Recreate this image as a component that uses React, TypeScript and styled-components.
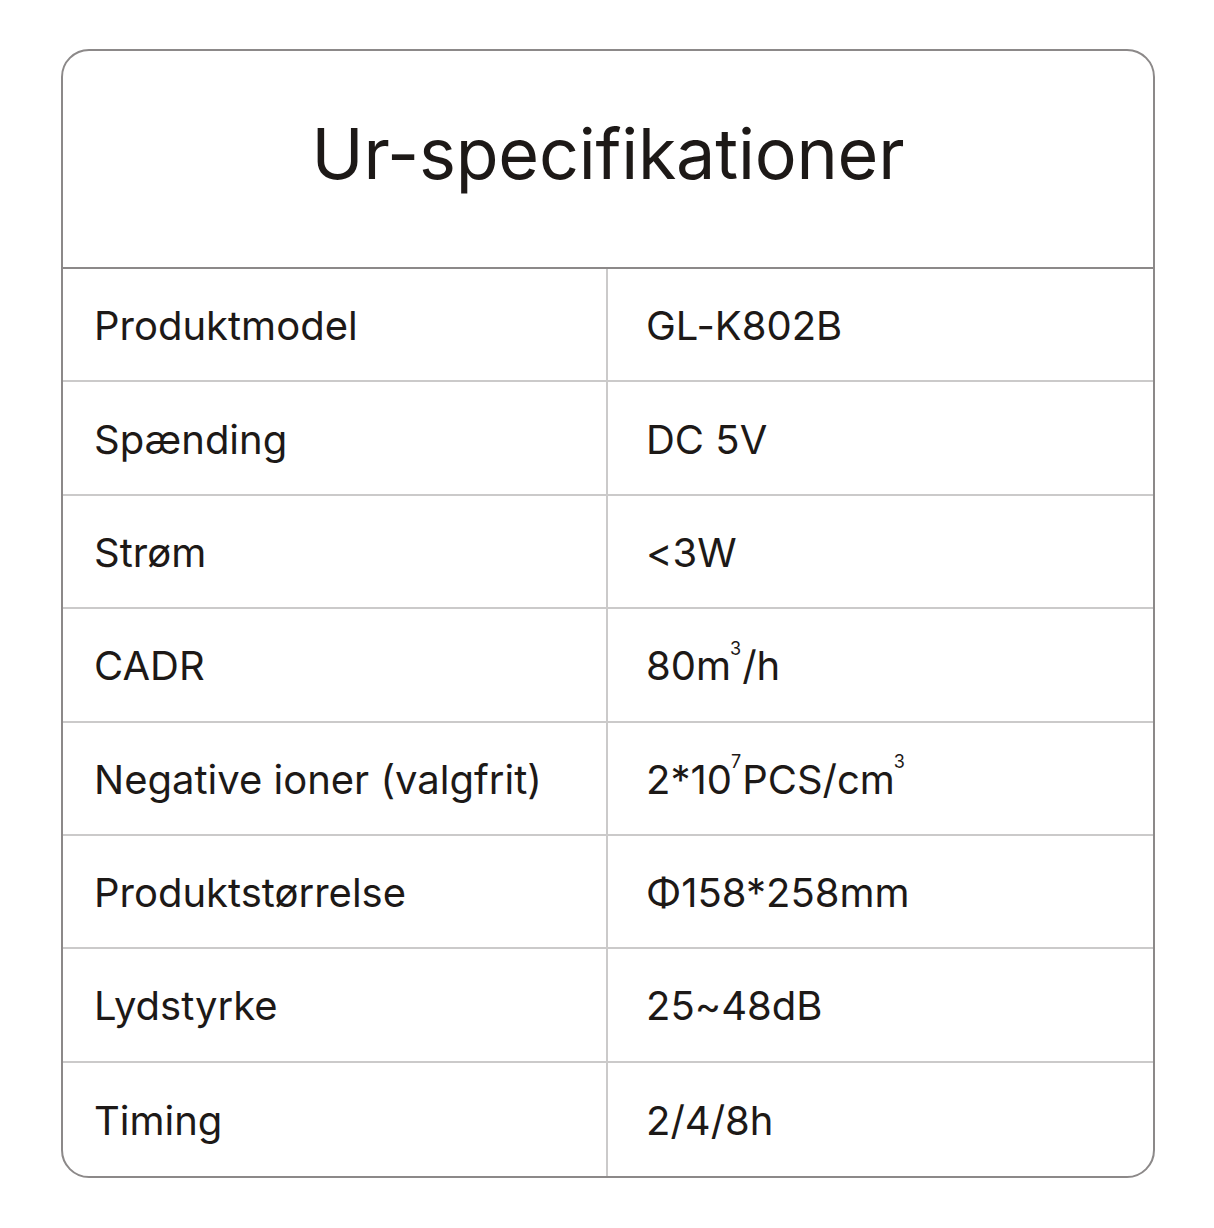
import React from "react";
import styled, { createGlobalStyle } from "styled-components";

const GlobalStyle = createGlobalStyle`
  html, body {
    margin: 0;
    padding: 0;
    background: #ffffff;
  }
  body {
    font-family: "Inter", "Noto Sans", "Liberation Sans", sans-serif;
    font-feature-settings: "liga" 0, "calt" 0;
    color: #1d1917;
  }
`;

const Page = styled.div`
  width: 1214px;
  height: 1228px;
  padding: 49px 59px 0 61px;
  box-sizing: border-box;
`;

const Card = styled.div`
  height: 1129px;
  box-sizing: border-box;
  display: flex;
  flex-direction: column;
  border: 2px solid #8c8989;
  border-radius: 28px;
  overflow: hidden;
  background: #ffffff;
`;

const Header = styled.div`
  height: 218px;
  flex: none;
  box-sizing: border-box;
  display: flex;
  align-items: center;
  justify-content: center;
  padding-bottom: 12px;
  border-bottom: 2px solid #8c8989;
`;

const Title = styled.h1`
  margin: 0;
  font-size: 70px;
  font-weight: 400;
  letter-spacing: -0.2px;
  color: #1d1917;
`;

const Table = styled.div`
  flex: 1;
  display: grid;
  grid-template-columns: 545px 1fr;
  grid-template-rows: repeat(8, 1fr);
`;

const Cell = styled.div<{ $side: "left" | "right"; $last: boolean }>`
  display: flex;
  align-items: center;
  box-sizing: border-box;
  padding-left: ${(p) => (p.$side === "left" ? 31 : 38)}px;
  padding-top: 2px;
  border-bottom: ${(p) => (p.$last ? "none" : "2px solid #cbcaca")};
  border-right: ${(p) => (p.$side === "left" ? "2px solid #cbcaca" : "none")};
  font-size: 40px;
  color: #1d1917;
  white-space: nowrap;
`;

const Sup = styled.sup`
  font-size: 0.45em;
  line-height: 0;
  vertical-align: 0;
  position: relative;
  top: -0.95em;
  margin: 0 1px 0 -1px;
`;

const rows: { label: string; value: React.ReactNode }[] = [
  { label: "Produktmodel", value: "GL-K802B" },
  { label: "Spænding", value: "DC 5V" },
  { label: "Strøm", value: "<3W" },
  {
    label: "CADR",
    value: (
      <>
        80m<Sup>3</Sup>/h
      </>
    ),
  },
  {
    label: "Negative ioner (valgfrit)",
    value: (
      <>
        2*10<Sup>7</Sup>PCS/cm<Sup>3</Sup>
      </>
    ),
  },
  { label: "Produktstørrelse", value: "Φ158*258mm" },
  { label: "Lydstyrke", value: "25~48dB" },
  { label: "Timing", value: "2/4/8h" },
];

export default function App() {
  return (
    <>
      <GlobalStyle />
      <Page>
        <Card>
          <Header>
            <Title>Ur-specifikationer</Title>
          </Header>
          <Table>
            {rows.map((row, i) => {
              const last = i === rows.length - 1;
              return (
                <React.Fragment key={row.label}>
                  <Cell $side="left" $last={last}>
                    {row.label}
                  </Cell>
                  <Cell $side="right" $last={last}>
                    {row.value}
                  </Cell>
                </React.Fragment>
              );
            })}
          </Table>
        </Card>
      </Page>
    </>
  );
}
